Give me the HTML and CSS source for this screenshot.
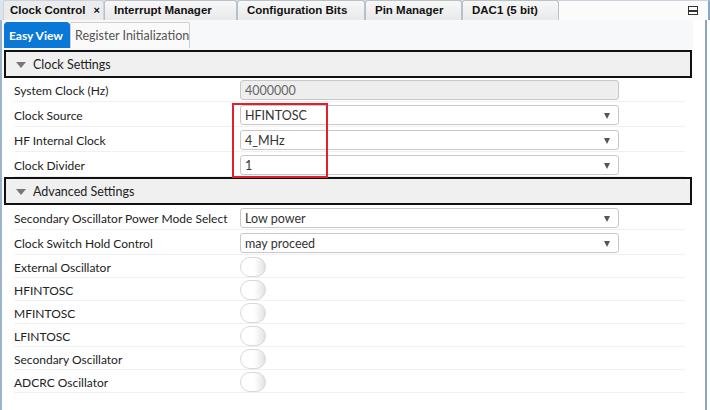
FILE: index.html
```html
<!DOCTYPE html>
<html>
<head>
<meta charset="utf-8">
<link rel="stylesheet" href="styles.css">
</head>
<body>
<div class="window">
  <div class="tabbar">
    <div class="tab active">Clock Control <span class="close">×</span></div>
    <div class="tab">Interrupt Manager</div>
    <div class="tab">Configuration Bits</div>
    <div class="tab">Pin Manager</div>
    <div class="tab">DAC1 (5 bit)</div>
    <div class="tabfill"><span class="minbox"></span></div>
  </div>
  <div class="frame">
    <div class="subtabs">
      <div class="subtab on">Easy View</div>
      <div class="subtab">Register Initialization</div>
    </div>
    <div class="panel">
      <div class="section"><span class="tri"></span>Clock Settings</div>
      <div class="group">
        <div class="row first"><span class="label">System Clock (Hz)</span><div class="field ro">4000000</div></div>
        <div class="row"><span class="label">Clock Source</span><div class="field sel">HFINTOSC<span class="arrow"></span></div></div>
        <div class="row"><span class="label">HF Internal Clock</span><div class="field sel">4_MHz<span class="arrow"></span></div></div>
        <div class="row"><span class="label">Clock Divider</span><div class="field sel">1<span class="arrow"></span></div></div>
        <div class="highlight"></div>
      </div>
      <div class="section"><span class="tri"></span>Advanced Settings</div>
      <div class="group">
        <div class="row"><span class="label">Secondary Oscillator Power Mode Select</span><div class="field sel">Low power<span class="arrow"></span></div></div>
        <div class="row"><span class="label">Clock Switch Hold Control</span><div class="field sel">may proceed<span class="arrow"></span></div></div>
        <div class="row t"><span class="label">External Oscillator</span><span class="toggle"></span></div>
        <div class="row t"><span class="label">HFINTOSC</span><span class="toggle"></span></div>
        <div class="row t"><span class="label">MFINTOSC</span><span class="toggle"></span></div>
        <div class="row t"><span class="label">LFINTOSC</span><span class="toggle"></span></div>
        <div class="row t"><span class="label">Secondary Oscillator</span><span class="toggle"></span></div>
        <div class="row t"><span class="label">ADCRC Oscillator</span><span class="toggle"></span></div>
      </div>
    </div>
  </div>
</div>
</body>
</html>
```
FILE: styles.css
```css
html, body { margin: 0; padding: 0; }
body {
  width: 710px; height: 410px; overflow: hidden;
  background: #ffffff;
  font-family: Lato, "Open Sans", sans-serif;
  font-size: 12px; color: #222;
}
.window { display: flex; flex-direction: column; height: 410px; }
.tabbar {
  display: flex; height: 20px; background: #dde4ec;
  padding-left: 3px; box-sizing: border-box;
}
.tab {
  font-family: "Liberation Sans", Arial, sans-serif; font-weight: bold; font-size: 11.5px;
  color: #111; height: 20px; box-sizing: border-box;
  padding: 3px 0 0 9px;
  background: linear-gradient(#f8f8f8, #e9e9e9);
  border: 1px solid #b8c0c8; border-bottom: none;
  border-radius: 3px 3px 0 0;
  white-space: nowrap; flex: none;
}
.tab.active { background: #ececec; border-color: #c9d4e0; padding-left: 6px; width: 101px; }
.tab:nth-child(2) { width: 133px; }
.tab:nth-child(3) { width: 128px; }
.tab:nth-child(4) { width: 97px; }
.tab:nth-child(5) { width: 97px; }
.close { font-size: 11px; margin-left: 5px; }
.tabfill {
  flex: 1; background: #fbfbfb; border-top: 1px solid #c9d4e0; border-right: 2px solid #8ba6c4;
  display: flex; justify-content: flex-end; align-items: center; padding-right: 10px;
}
.minbox {
  width: 8px; height: 7px; border: 1px solid #333; background: #fff;
  box-shadow: inset 0 -2px 0 #fff, inset 0 -4px 0 #333;
}
.frame {
  flex: 1; background: #fff;
  border-left: 2px solid #9db4ce; border-right: 2px solid #8ba6c4;
  margin-right: 3px;
  display: flex; flex-direction: column;
}
.subtabs {
  display: flex; height: 30px; background: #f7f8fa; padding: 2px 0 2px 2px; box-sizing: border-box;
  margin-right: 12px;
}
.subtab {
  height: 26px; box-sizing: border-box; padding: 5px 0 0 4px;
  border: 1px solid #d0d0d0; border-bottom: none; background: #fafafa;
  font-size: 12.5px; color: #555; border-radius: 2px 2px 0 0; white-space: nowrap;
  width: 120px; flex: none;
}
.subtab.on {
  background: #0a78d6; color: #fff; font-weight: bold; border-color: #0a78d6;
  width: 66px; padding-left: 4px; border-radius: 4px 4px 0 0; font-size: 12px;
}
.panel { margin-left: 2px; width: 688px; }
.section {
  height: 28px; box-sizing: border-box; border: 2px solid #111;
  background: #f0f0f0; display: flex; align-items: center;
  padding-left: 10px; padding-top: 1px; font-size: 12.5px; color: #222;
}
.tri {
  width: 0; height: 0; border-left: 5px solid transparent; border-right: 5px solid transparent;
  border-top: 6px solid #777; margin-right: 7px; margin-top: 0;
}
.group { position: relative; padding-left: 10px; padding-right: 7px; }
.row {
  display: flex; align-items: center; height: 25px; box-sizing: border-box;
  border-bottom: 1px solid #f0f0f0; padding-top: 1px;
}
.row.first { height: 24px; }
.row.t { height: 23px; }
.label { width: 226px; flex: none; white-space: nowrap; padding-top: 1px; }
.field {
  width: 379px; height: 20px; box-sizing: border-box; border: 1px solid #c8c8c8;
  border-radius: 3px; background: #fff; padding: 0 0 0 4px; font-size: 12.5px;
  line-height: 20px; color: #333; position: relative;
}
.field.ro { background: #eeeeee; color: #666; }
.arrow {
  position: absolute; right: 8px; top: 7px; width: 0; height: 0;
  border-left: 3px solid transparent; border-right: 3px solid transparent;
  border-top: 6px solid #555;
}
.toggle {
  width: 26px; height: 20px; box-sizing: border-box; border: 1px solid #d8d8d8;
  border-radius: 10px; background: linear-gradient(90deg, #fff 55%, #e2e2e2 100%);
}
.highlight {
  position: absolute; left: 228px; top: 25px; width: 96px; height: 75px;
  box-sizing: border-box; border: 2px solid #e0202a;
}
```
